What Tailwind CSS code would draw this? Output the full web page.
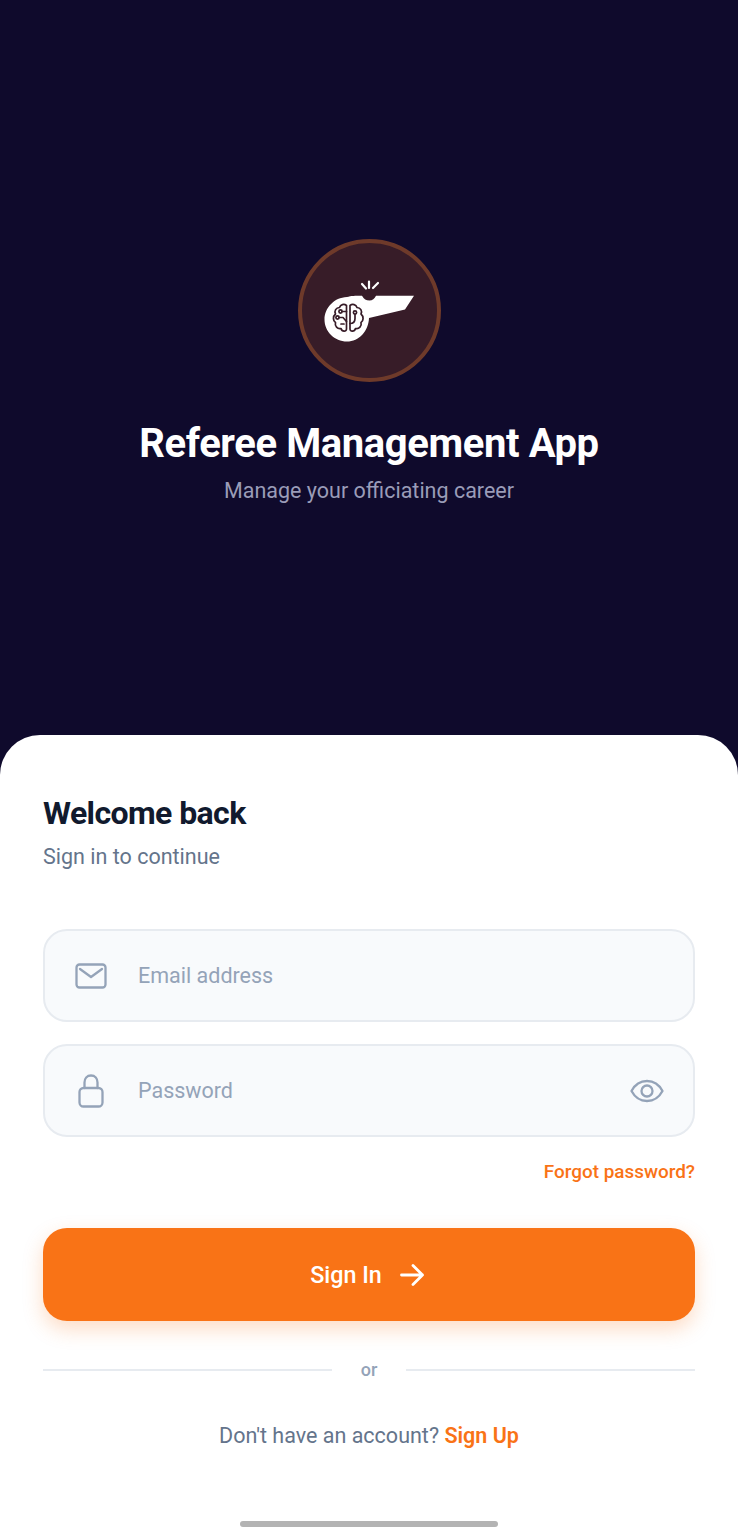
<!DOCTYPE html>
<html lang="en">

<head>
    <meta charset="UTF-8">
    <meta name="viewport" content="width=device-width, initial-scale=1.0">
    <title>Referee Management App</title>
    <script src="https://cdn.jsdelivr.net/npm/@tailwindcss/browser@4"></script>
</head>

<body class="bg-[#0f0a2c] font-['Roboto',sans-serif]">
    <div id="screen" class="flex flex-col w-[738px] h-[1537px] overflow-hidden">

        <!-- hero -->
        <div id="hero" class="h-[735px] shrink-0 flex flex-col items-center pt-[239px]">
            <div class="w-[143px] h-[143px] rounded-full bg-[#371c28] border-[4px] border-[#6e3a2a] flex items-center justify-center">
                <svg width="135" height="135" viewBox="302 243 135 135">
                    <g fill="none" stroke="#fff" stroke-width="2.200" stroke-linecap="round">
                        <path d="M369 281.500V288M362 284L366 288.500M378 283L373 288" />
                    </g>
                    <path fill="#fff" d="M347 297C351 295.800 355 295.700 362 295.700C364 299 366 300.500 369.500 300.500C372.500 300.500 374.500 298.500 376 295.700H414L405 309.500L369 318C368.500 331 359 341.500 347 341.500C334.500 341.500 324.500 331.700 324.500 319.500C324.500 308 334 297.500 347 297Z" />
                    <g fill="none" stroke="#371c28" stroke-width="1.700" stroke-linecap="round" stroke-linejoin="round">
                        <path d="M346.500 305.500C344 303.500 340.500 304.500 339.500 307.500C336 307.500 334 311 335.500 314C332.500 316.500 333 321 335.500 322.500C334.500 326 337.500 329.500 341 328.500C342 332 346.500 332 346.500 329Z" />
                        <path d="M350 305.500C352.500 303.500 356 304.500 357 307.500C360.500 307.500 362.500 311 361 314C364 316.500 363.500 321 361 322.500C362 326 359 329.500 355.500 328.500C354.500 332 350 332 350 329Z" />
                        <path d="M342 311.500H346.500M339 317.500H343L346.500 321.500M341 324H344" />
                        <path d="M350 323.500C353 323.500 355 321.500 355 318.500V314.500" />
                        <circle cx="355" cy="312.500" r="1.600" />
                        <circle cx="340.500" cy="311.500" r="1.600" />
                        <circle cx="337.500" cy="317.500" r="1.600" />
                    </g>
                </svg>
            </div>
            <h1 class="mt-[37px] text-[40px] leading-[50px] font-bold text-white tracking-[-0.4px]">Referee Management App</h1>
            <p class="mt-[8px] text-[21.500px] leading-[28px] text-[#9a9cb8]">Manage your officiating career</p>
        </div>

        <!-- sign in card -->
        <div id="card" class="flex-1 bg-white rounded-t-[40px] px-[43px] pt-[59px] flex flex-col">
            <h2 class="text-[32px] leading-[38px] font-bold text-[#111a2e] tracking-[-0.6px]">Welcome back</h2>
            <p class="mt-[11px] text-[21.500px] leading-[28px] text-[#64748b]">Sign in to continue</p>

            <div class="mt-[58px] h-[93px] flex items-center rounded-[24px] border-2 border-[#e7ebf0] bg-[#f8fafc] pl-[30px] pr-[29px]">
                <svg class="w-[32px] h-[26px] shrink-0" viewBox="0 0 32 26" fill="none" stroke="#94a3b8" stroke-width="2.300" stroke-linecap="round" stroke-linejoin="round">
                    <rect x="1.500" y="1.500" width="29" height="23" rx="3" />
                    <path d="M5 6L16 14L27 6" />
                </svg>
                <input type="text" placeholder="Email address" class="ml-[31px] mt-[2px] flex-1 bg-transparent outline-none text-[21.500px] placeholder:text-[#94a3b8]">
            </div>

            <div class="mt-[22px] h-[93px] flex items-center rounded-[24px] border-2 border-[#e7ebf0] bg-[#f8fafc] pl-[30px] pr-[29px]">
                <svg class="w-[32px] h-[34px] shrink-0" viewBox="0 0 32 34" fill="none" stroke="#94a3b8" stroke-width="2.300" stroke-linecap="round" stroke-linejoin="round">
                    <rect x="4.500" y="14" width="23" height="18.500" rx="4" />
                    <path d="M9.500 14V8.500C9.500 4.500 12 1.500 16 1.500C20 1.500 22.500 4.500 22.500 8.500V14" />
                </svg>
                <input type="password" placeholder="Password" class="ml-[31px] mt-[2px] flex-1 bg-transparent outline-none text-[21.500px] placeholder:text-[#94a3b8]">
                <svg class="w-[34px] h-[24px] shrink-0" viewBox="0 0 34 24" fill="none" stroke="#94a3b8" stroke-width="2.300" stroke-linecap="round" stroke-linejoin="round">
                    <path d="M1.500 12C5 5.500 10.500 2 17 2C23.500 2 29 5.500 32.500 12C29 18.500 23.500 22 17 22C10.500 22 5 18.500 1.500 12Z" />
                    <circle cx="17" cy="12" r="5.500" />
                </svg>
            </div>

            <a class="mt-[23px] self-end text-[18.900px] leading-[24px] font-medium text-[#f97316]">Forgot password?</a>

            <button class="mt-[44px] h-[93px] rounded-[24px] bg-[#f97316] flex items-center justify-center gap-[18px] pr-[4px] text-white text-[23.300px] font-medium shadow-[0_8px_20px_rgba(249,115,22,0.25)]">
                <span class="mt-[2px]">Sign In</span>
                <svg class="w-[24px] h-[22px]" viewBox="0 0 24 22" fill="none" stroke="#fff" stroke-width="2.800" stroke-linecap="round" stroke-linejoin="round">
                    <path d="M1.500 11H22.500M13 1.500L22.500 11L13 20.500" />
                </svg>
            </button>

            <div class="mt-[37px] flex items-center gap-[29px]">
                <div class="flex-1 h-[2px] bg-[#e7ebf0]"></div>
                <span class="text-[18px] leading-[24px] font-medium text-[#94a3b8]">or</span>
                <div class="flex-1 h-[2px] bg-[#e7ebf0]"></div>
            </div>

            <p class="mt-[40px] text-center text-[21.500px] leading-[28px] text-[#64748b]">Don't have an account? <a class="font-semibold text-[#f97316]">Sign Up</a></p>

            <div class="mt-[71px] self-center w-[258px] h-[6px] rounded-full bg-[#b3b3b3]"></div>
        </div>
    </div>
</body>

</html>
